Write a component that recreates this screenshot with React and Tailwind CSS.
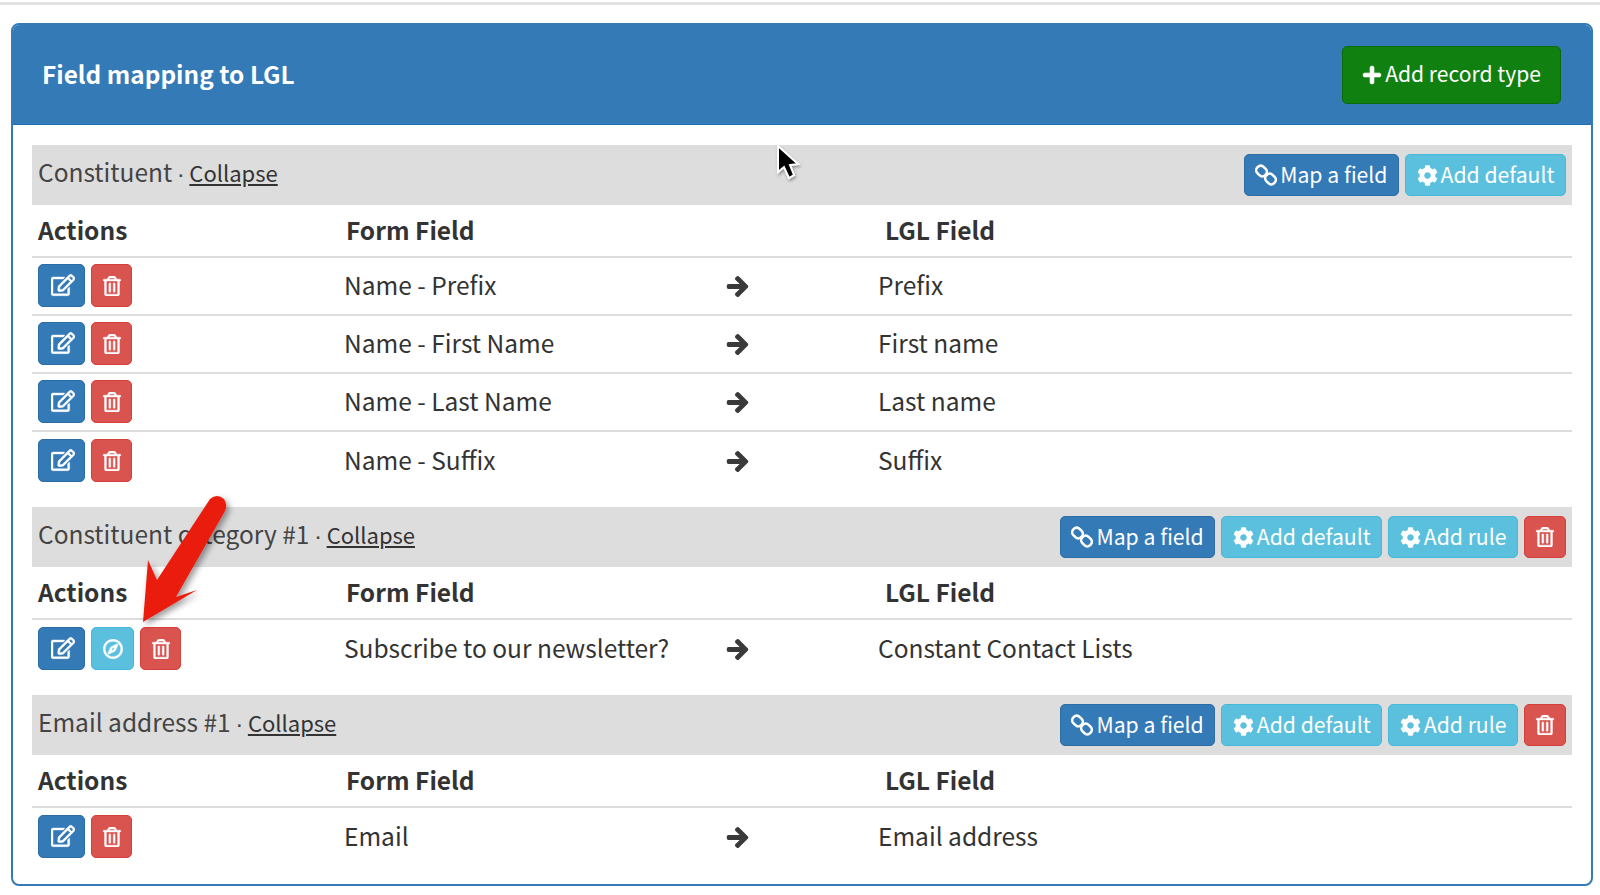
import { FaArrowRight, FaCog, FaPlus, FaRegCompass, FaRegEdit, FaRegTrashAlt } from 'react-icons/fa';

const FONT = { fontFamily: '"Noto Sans CJK SC", "Noto Sans", sans-serif' };

const SECTIONS = [
  {
    title: 'Constituent',
    extended: false,
    rows: [
      { form: 'Name - Prefix', lgl: 'Prefix' },
      { form: 'Name - First Name', lgl: 'First name' },
      { form: 'Name - Last Name', lgl: 'Last name' },
      { form: 'Name - Suffix', lgl: 'Suffix' },
    ],
  },
  {
    title: 'Constituent category #1',
    extended: true,
    rows: [{ form: 'Subscribe to our newsletter?', lgl: 'Constant Contact Lists', compass: true }],
  },
  {
    title: 'Email address #1',
    extended: true,
    rows: [{ form: 'Email', lgl: 'Email address' }],
  },
];

// chain icon, links run top-left to bottom-right
function ChainIcon() {
  return (
    <svg width="22" height="22" viewBox="0 0 22 22" fill="none" stroke="currentColor" strokeWidth="2.6">
      <rect x="1" y="2.6" width="11" height="8.8" rx="4" transform="rotate(45 6.5 7)" />
      <rect x="10" y="10.6" width="11" height="8.8" rx="4" transform="rotate(45 15.5 15)" />
    </svg>
  );
}

function BarButton({ tone, icon, children }) {
  const tones = {
    blue: 'bg-[#337ab7] border-[#2e6da4]',
    cyan: 'bg-[#5bc0de] border-[#46b8da]',
  };
  return (
    <button className={`h-[42px] flex items-center gap-[3px] rounded-[5px] border px-[10.5px] text-[21.2px] text-white ${tones[tone]}`}>
      {icon}
      <span className="-mt-[3px]">{children}</span>
    </button>
  );
}

function EditButton() {
  return (
    <button className="w-[47px] h-[43px] flex items-center justify-center rounded-[5px] border border-[#2e6da4] bg-[#337ab7] text-white">
      <FaRegEdit size={24} stroke="currentColor" strokeWidth={10} className="ml-[2px] -mt-[2px]" />
    </button>
  );
}

function TrashButton() {
  return (
    <button className="w-[41px] h-[43px] flex items-center justify-center rounded-[5px] border border-[#d43f3a] bg-[#d9534f] text-white">
      <FaRegTrashAlt size={20} stroke="currentColor" strokeWidth={10} />
    </button>
  );
}

function Section({ section }) {
  return (
    <section className="mb-[17px] last:mb-0">
      <div className="h-[60px] bg-[#dddddd] flex items-center justify-between pl-[6px] pr-[6px]">
        <div className="text-[24.5px] text-[#444444] -mt-[3px]">
          {section.title} <span className="font-['Liberation_Sans'] -mx-[1px]">·</span> <a className="underline text-[#333333] text-[22px]">Collapse</a>
        </div>
        <div className="flex items-center gap-[6px]">
          <BarButton tone="blue" icon={<ChainIcon />}>Map a field</BarButton>
          <BarButton tone="cyan" icon={<FaCog size={21} />}>Add default</BarButton>
          {section.extended && <BarButton tone="cyan" icon={<FaCog size={21} />}>Add rule</BarButton>}
          {section.extended && (
            <button className="w-[42px] h-[42px] flex items-center justify-center rounded-[5px] border border-[#d43f3a] bg-[#d9534f] text-white">
              <FaRegTrashAlt size={20} stroke="currentColor" strokeWidth={10} />
            </button>
          )}
        </div>
      </div>

      <div className="h-[53px] grid grid-cols-[308px_539px_1fr] items-center border-b-2 border-[#dddddd] font-bold text-[24.5px] text-[#333333] pl-[6px]">
        <div>Actions</div>
        <div>Form Field</div>
        <div>LGL Field</div>
      </div>

      {section.rows.map((row, i) => (
        <div
          key={row.form}
          className={`h-[58px] grid grid-cols-[306px_382px_152px_1fr] items-center text-[24.5px] text-[#333333] pl-[6px] ${i < section.rows.length - 1 ? 'border-b-2 border-[#dddddd]' : ''}`}
        >
          <div className="flex items-center gap-[6px] -mt-[1px]">
            <EditButton />
            {row.compass && (
              <button className="w-[43px] h-[43px] flex items-center justify-center rounded-[5px] border border-[#46b8da] bg-[#5bc0de] text-white">
                <FaRegCompass size={20} stroke="currentColor" strokeWidth={14} />
              </button>
            )}
            <TrashButton />
          </div>
          <div className="-mt-[1px]">{row.form}</div>
          <div><FaArrowRight size={23} stroke="currentColor" strokeWidth={30} className="text-[#3a3a3a]" /></div>
          <div className="-mt-[1px]">{row.lgl}</div>
        </div>
      ))}
    </section>
  );
}

export default function App() {
  return (
    <div style={FONT} className="relative w-[1600px] h-[895px] overflow-hidden bg-white">
      <div className="h-[3px] mt-[2px] bg-[#e2e2e2]" />
      <div className="mt-[18px] ml-[11px] mr-[7px] h-[863px] rounded-[8px] border-2 border-[#337ab7] overflow-hidden">
        <div className="h-[100px] bg-[#337ab7] flex items-center justify-between pl-[29px] pr-[30px] border-b border-[#1f6fb5]">
          <h1 className="text-[24.4px] font-bold text-white">Field mapping to LGL</h1>
          <button className="h-[58px] flex items-center gap-[3px] rounded-[5px] border border-[#0b6b0b] bg-[#108010] px-[19px] text-[21.1px] text-white">
            <FaPlus size={20} stroke="currentColor" strokeWidth={20} />
            <span className="-mt-[2px]">Add record type</span>
          </button>
        </div>
        <div className="pt-[20px] px-[19px]">
          {SECTIONS.map(s => <Section key={s.title} section={s} />)}
        </div>
      </div>

      {/* red callout arrow */}
      <svg className="absolute left-[130px] top-[488px]" width="110" height="145" viewBox="130 488 110 145">
        <defs>
          <filter id="arrowShadow" x="-20%" y="-20%" width="150%" height="150%">
            <feDropShadow dx="3" dy="3" stdDeviation="3" floodColor="#000" floodOpacity="0.4" />
          </filter>
        </defs>
        <path
          d="M143 622 L148 560 L157 580 L210 499 Q217 493 224 499 Q228 505 225 511 L176 597 L197 590 Z"
          fill="#ea1f0c"
          filter="url(#arrowShadow)"
        />
      </svg>

      {/* mouse cursor */}
      <svg className="absolute left-[770px] top-[140px]" width="36" height="44" viewBox="770 140 36 44">
        <defs>
          <filter id="cursorShadow" x="-30%" y="-30%" width="160%" height="160%">
            <feDropShadow dx="1" dy="2" stdDeviation="1.5" floodColor="#000" floodOpacity="0.35" />
          </filter>
        </defs>
        <path
          d="M778 146 L778 172 L784 167 L789 178 L794 175 L790 165 L798 164 Z"
          fill="#000"
          stroke="#fff"
          strokeWidth="2"
          filter="url(#cursorShadow)"
        />
      </svg>
    </div>
  );
}
